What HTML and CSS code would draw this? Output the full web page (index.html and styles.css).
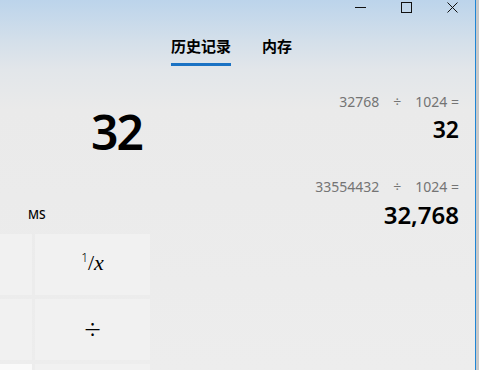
FILE: index.html
```html
<!DOCTYPE html>
<html lang="zh-CN">
<head>
    <meta charset="UTF-8">
    <title>计算器</title>
    <link rel="stylesheet" href="styles.css">
</head>
<body>

    <div class="window">
        <div class="titlebar">
            <div class="caption-btn">
                <svg width="11" height="11" viewBox="0 0 11 11"><path d="M0 5.5h11" stroke="#111" stroke-width="1"/></svg>
            </div>
            <div class="caption-btn">
                <svg width="11" height="11" viewBox="0 0 11 11"><rect x="0.5" y="0.5" width="10" height="10" fill="none" stroke="#111" stroke-width="1"/></svg>
            </div>
            <div class="caption-btn">
                <svg width="11" height="11" viewBox="0 0 11 11"><path d="M0.5 0.5l10 10M10.5 0.5l-10 10" stroke="#111" stroke-width="1"/></svg>
            </div>
        </div>

        <div class="main">
            <div class="calc">
                <div class="display">32</div>
                <div class="memory-row">
                    <span class="mem-btn">MS</span>
                </div>
                <div class="keypad">
                    <div class="key"></div>
                    <div class="key"><span class="frac"><sup>1</sup>/<i>x</i></span></div>
                    <div class="key"></div>
                    <div class="key divide">&divide;</div>
                    <div class="key light"></div>
                    <div class="key"></div>
                </div>
            </div>

            <div class="history">
                <div class="tabs">
                    <div class="tab active">历史记录</div>
                    <div class="tab">内存</div>
                </div>
                <div class="history-list">
                    <div class="entry">
                        <div class="expr">32768<span class="op">&divide;</span>1024 =</div>
                        <div class="result">32</div>
                    </div>
                    <div class="entry">
                        <div class="expr">33554432<span class="op">&divide;</span>1024 =</div>
                        <div class="result">32,768</div>
                    </div>
                </div>
            </div>
        </div>
    </div>

</body>
</html>
```

FILE: styles.css
```css
* {
    margin: 0;
    padding: 0;
    box-sizing: border-box;
}
body {
    width: 479px;
    height: 370px;
    overflow: hidden;
    background-color: #c9c9c9;
    font-family: "Noto Sans", "Noto Sans CJK SC", sans-serif;
    color: #000;
}
.window {
    width: 476px;
    height: 370px;
    overflow: hidden;
    border-right: 1px solid #1f86d6;
    background: linear-gradient(180deg, #bcd4eb 0, #d3dfea 40px, #e2e6ea 70px, #eaeaea 110px, #ededed 100%);
    display: flex;
    flex-direction: column;
}
.titlebar {
    height: 15px;
    display: flex;
    justify-content: flex-end;
    align-items: center;
}
.caption-btn {
    width: 46px;
    height: 15px;
    display: flex;
    justify-content: center;
    align-items: center;
}
.main {
    flex: 1;
    display: flex;
}
.calc {
    width: 152px;
    display: flex;
    flex-direction: column;
}
.display {
    height: 130px;
    padding: 87px 10px 0 0;
    text-align: right;
    font-size: 48px;
    font-weight: 600;
    letter-spacing: -2px;
    line-height: 60px;
}
.memory-row {
    height: 45px;
    padding: 57px 0 0 28px;
}
.mem-btn {
    font-size: 12px;
    font-weight: 500;
}
.keypad {
    display: grid;
    grid-template-columns: 32px 115px;
    grid-auto-rows: 61px;
    column-gap: 3px;
    row-gap: 4px;
    margin-top: 32px;
}
.key {
    background-color: #f1f1f1;
    display: flex;
    justify-content: center;
    align-items: center;
    font-size: 20px;
    font-weight: 300;
}
.key.light {
    background-color: #fafafa;
}
.key.divide {
    font-size: 30px;
    font-weight: 300;
    padding-bottom: 2px;
}
.frac {
    font-family: "Liberation Serif", serif;
    font-size: 22px;
    padding-bottom: 4px;
}
.frac sup {
    font-family: "Noto Sans", sans-serif;
    font-size: 12px;
}
.history {
    flex: 1;
    padding: 20px 16px 0 19px;
}
.tabs {
    display: flex;
    gap: 31px;
}
.tab {
    font-family: "Noto Sans CJK SC", sans-serif;
    font-size: 15px;
    font-weight: 700;
    line-height: 22px;
    padding-bottom: 6px;
    border-bottom: 3px solid transparent;
}
.tab.active {
    border-bottom-color: #1a72c4;
}
.history-list {
    margin-top: 26px;
}
.entry {
    text-align: right;
    height: 85px;
}
.expr {
    font-size: 14px;
    color: #747474;
    line-height: 20px;
}
.op {
    margin: 0 14px;
}
.result {
    font-size: 23px;
    font-weight: 600;
    line-height: 34px;
}
.entry + .entry .result {
    font-size: 24px;
    line-height: 36px;
}
```
